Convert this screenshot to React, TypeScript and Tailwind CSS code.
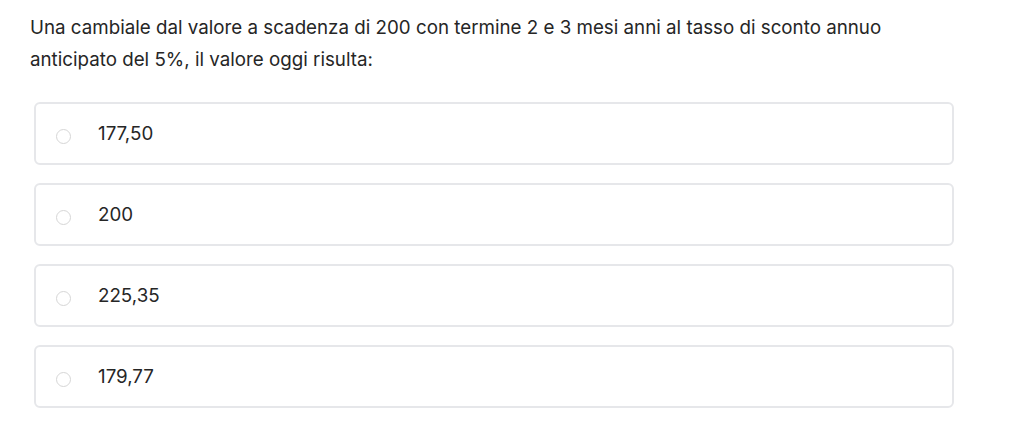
import React from 'react';

const options = ['177,50', '200', '225,35', '179,77'];

export default function App() {
  return (
    <div className="min-h-[425px] w-[1024px] bg-white pl-[30px] pt-[12px] font-['Inter',Arial,sans-serif] text-[#262626]">
      <p className="w-[900px] text-[18.75px] leading-[32px]">
        Una cambiale dal valore a scadenza di 200 con termine 2 e 3 mesi anni al tasso di sconto annuo anticipato del 5%, il valore oggi risulta:
      </p>
      <div className="mt-[26px] ml-[4px] flex w-[920px] flex-col gap-[18px]">
        {options.map((opt) => (
          <label
            key={opt}
            className="flex h-[63px] items-center rounded-[6px] border-2 border-[#e6e7ea] bg-white pl-[20px]"
          >
            <span className="mt-[5px] h-[15px] w-[15px] rounded-full border border-[#d6d6d6] bg-white" />
            <span className="ml-[27px] mt-[2px] text-[18.75px]">{opt}</span>
          </label>
        ))}
      </div>
    </div>
  );
}
